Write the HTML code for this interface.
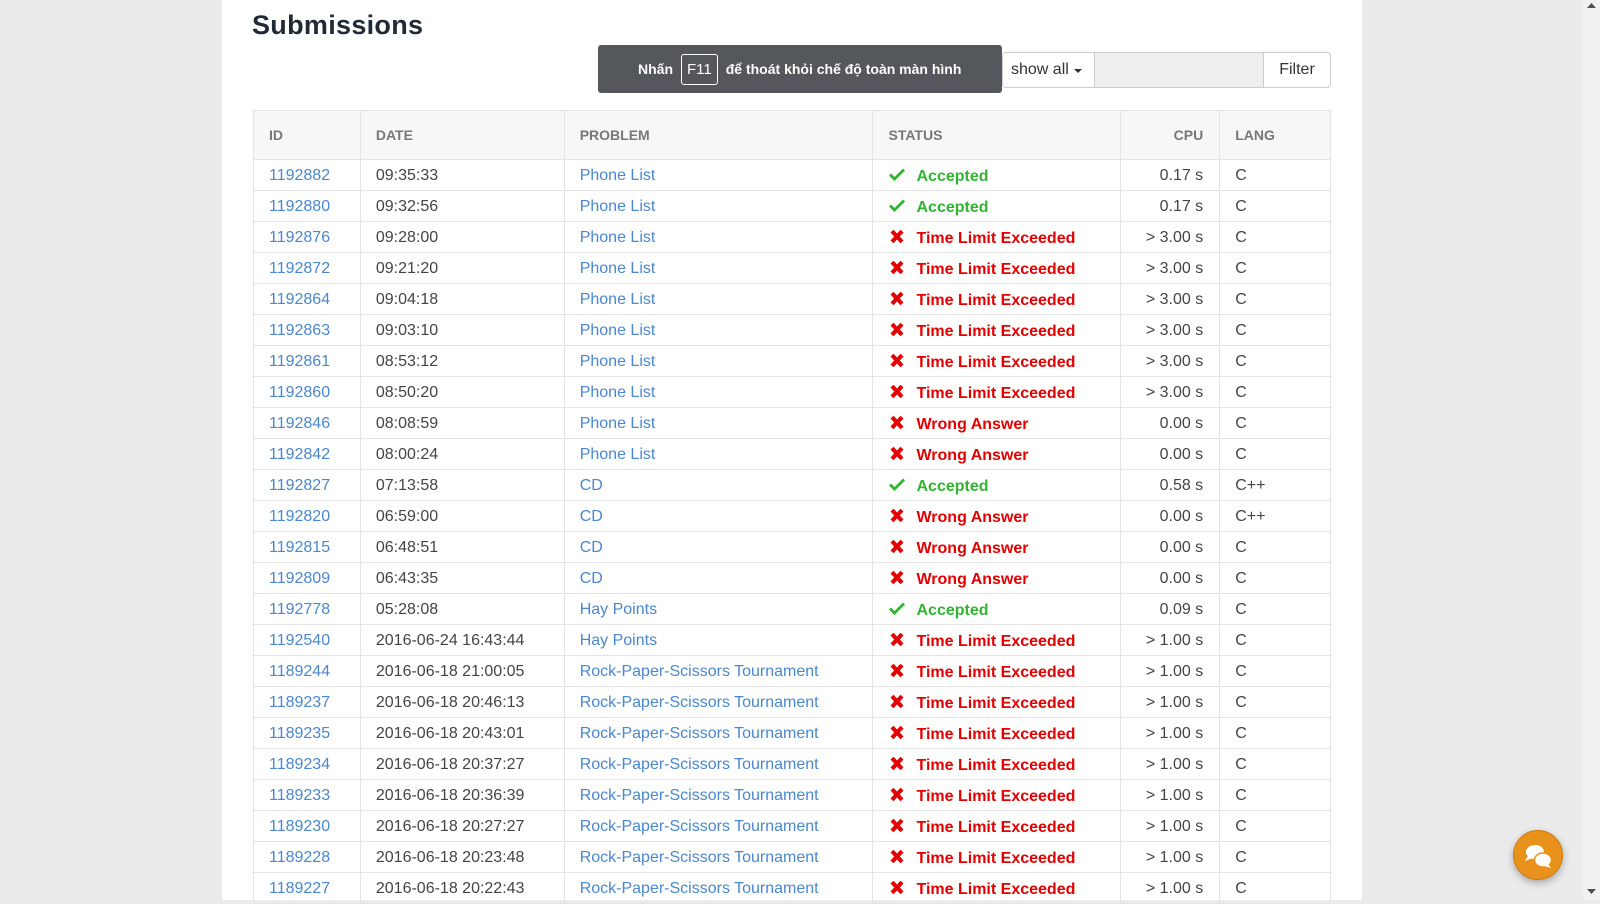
<!DOCTYPE html>
<html><head><meta charset="utf-8"><style>
*{box-sizing:border-box;margin:0;padding:0}
html,body{width:1600px;height:900px;overflow:hidden;background:#ebebeb;font-family:"Liberation Sans","Noto Sans CJK SC",sans-serif}
.panel{position:absolute;left:222px;top:0;width:1140px;height:900px;background:#fff}
h1{position:absolute;left:252px;top:10px;font-size:27px;font-weight:bold;color:#1f2a35;letter-spacing:0.3px}
.toast{position:absolute;left:598px;top:45px;width:404px;height:48px;background:#54575b;border-radius:3px;color:#fff;font-size:14px;font-weight:bold;display:flex;align-items:center;padding-left:40px;z-index:2}
.toast .k{display:inline-block;border:1px solid #fff;border-radius:3px;padding:6px 5px;margin:0 8px;font-weight:normal;font-size:15px}
.ig{position:absolute;left:1002px;top:52px;width:329px;height:36px;border:1px solid #ccc;border-radius:4px;display:flex;font-size:16px;color:#333}
.ig .b1{width:92px;display:flex;align-items:center;padding-left:8px;border-right:1px solid #ccc}
.ig .in{width:169px;background:#eee;border-right:1px solid #ccc}
.ig .b2{flex:1;display:flex;align-items:center;justify-content:center}
.tri{display:inline-block;border-left:4px solid transparent;border-right:4px solid transparent;border-top:4px solid #333;margin-left:5px;margin-top:2px}
table{position:absolute;left:253px;top:110px;width:1078px;border-collapse:collapse;font-size:16px}
th{height:49px;background:#f6f7f8;color:#777;font-size:14px;font-weight:bold;text-align:left;padding-left:15px;border:1px solid #e4e4e4}
td{height:31px;padding-left:15px;padding-top:2px;border:1px solid #e4e4e4;color:#444;white-space:nowrap}
td.r,th.r{text-align:right;padding-right:16px;padding-left:0}
a{color:#4a87cf;text-decoration:none}
.ok{color:#31b531;font-weight:bold}
.no{color:#e30000;font-weight:bold}
.ic{display:inline-block;width:18px;margin-right:10px;vertical-align:-2px}
.sb{position:absolute;left:1583px;top:0;width:17px;height:900px;background:#f1f1f1}
.th{position:absolute;left:1585px;top:102px;width:13px;height:258px;background:#c1c1c1}
.chat{position:absolute;left:1513px;top:830px;width:50px;height:50px;border-radius:50%;background:#e8921c;border:1px solid #d07a10;box-shadow:0 3px 8px rgba(0,0,0,.3)}
</style></head><body>
<div class="panel"></div>
<h1>Submissions</h1>
<div class="toast">Nhấn<span class="k">F11</span>để thoát khỏi chế độ toàn màn hình</div>
<div class="ig"><div class="b1">show all<span class="tri"></span></div><div class="in"></div><div class="b2">Filter</div></div>
<table>
<colgroup><col style="width:107px"><col style="width:204px"><col style="width:309px"><col style="width:248px"><col style="width:99px"><col style="width:111px"></colgroup>
<tr><th>ID</th><th>DATE</th><th>PROBLEM</th><th>STATUS</th><th class="r">CPU</th><th>LANG</th></tr>
<tbody id="tb"></tbody>
</table>
<div class="sb"><div class="th"></div><svg style="position:absolute;left:4px;top:3px" width="9" height="6"><path d="M0 5L4.5 0L9 5Z" fill="#505050"/></svg><svg style="position:absolute;left:4px;top:889px" width="9" height="6"><path d="M0 0L4.5 5L9 0Z" fill="#505050"/></svg></div>
<div class="chat"><svg width="50" height="50" viewBox="0 0 50 50"><ellipse cx="21" cy="21" rx="9" ry="7" fill="#fff"/><path d="M14 25L11 30L19 27Z" fill="#fff"/><ellipse cx="29" cy="29" rx="8.5" ry="7" fill="#fff" stroke="#e8921c" stroke-width="1.5"/><path d="M34 33L37 37L30 35Z" fill="#fff"/></svg></div>
<script>
var d=[["1192882","09:35:33","Phone List",1,"0.17 s","C"],["1192880","09:32:56","Phone List",1,"0.17 s","C"],["1192876","09:28:00","Phone List",0,"&gt; 3.00 s","C"],["1192872","09:21:20","Phone List",0,"&gt; 3.00 s","C"],["1192864","09:04:18","Phone List",0,"&gt; 3.00 s","C"],["1192863","09:03:10","Phone List",0,"&gt; 3.00 s","C"],["1192861","08:53:12","Phone List",0,"&gt; 3.00 s","C"],["1192860","08:50:20","Phone List",0,"&gt; 3.00 s","C"],["1192846","08:08:59","Phone List",2,"0.00 s","C"],["1192842","08:00:24","Phone List",2,"0.00 s","C"],["1192827","07:13:58","CD",1,"0.58 s","C++"],["1192820","06:59:00","CD",2,"0.00 s","C++"],["1192815","06:48:51","CD",2,"0.00 s","C"],["1192809","06:43:35","CD",2,"0.00 s","C"],["1192778","05:28:08","Hay Points",1,"0.09 s","C"],["1192540","2016-06-24 16:43:44","Hay Points",0,"&gt; 1.00 s","C"]];
var rp=[["1189244","21:00:05"],["1189237","20:46:13"],["1189235","20:43:01"],["1189234","20:37:27"],["1189233","20:36:39"],["1189230","20:27:27"],["1189228","20:23:48"],["1189227","20:22:43"]];
rp.forEach(function(r){d.push([r[0],"2016-06-18 "+r[1],"Rock-Paper-Scissors Tournament",0,"&gt; 1.00 s","C"])});
var ck='<svg class="ic" width="18" height="16" viewBox="0 0 18 16"><path d="M1 8.5L6.5 14L17 3.5L15 1.5L6.5 10L3 6.5Z" fill="#31b531"/></svg>';
var xx='<svg class="ic" width="18" height="16" viewBox="0 0 18 16"><path d="M2.5 3.5L5.5 0.8L9 4.5L12.5 0.8L15.5 3.5L11.8 7.5L15.5 11.5L12.5 14.2L9 10.5L5.5 14.2L2.5 11.5L6.2 7.5Z" fill="#e30000"/></svg>';
var h="";d.forEach(function(r){var s=r[3]==1?ck+'<span class="ok">Accepted</span>':xx+'<span class="no">'+(r[3]==0?'Time Limit Exceeded':'Wrong Answer')+'</span>';
h+='<tr><td><a>'+r[0]+'</a></td><td>'+r[1]+'</td><td><a>'+r[2]+'</a></td><td>'+s+'</td><td class="r">'+r[4]+'</td><td>'+r[5]+'</td></tr>'});
document.getElementById("tb").innerHTML=h;
</script>
</body></html>
